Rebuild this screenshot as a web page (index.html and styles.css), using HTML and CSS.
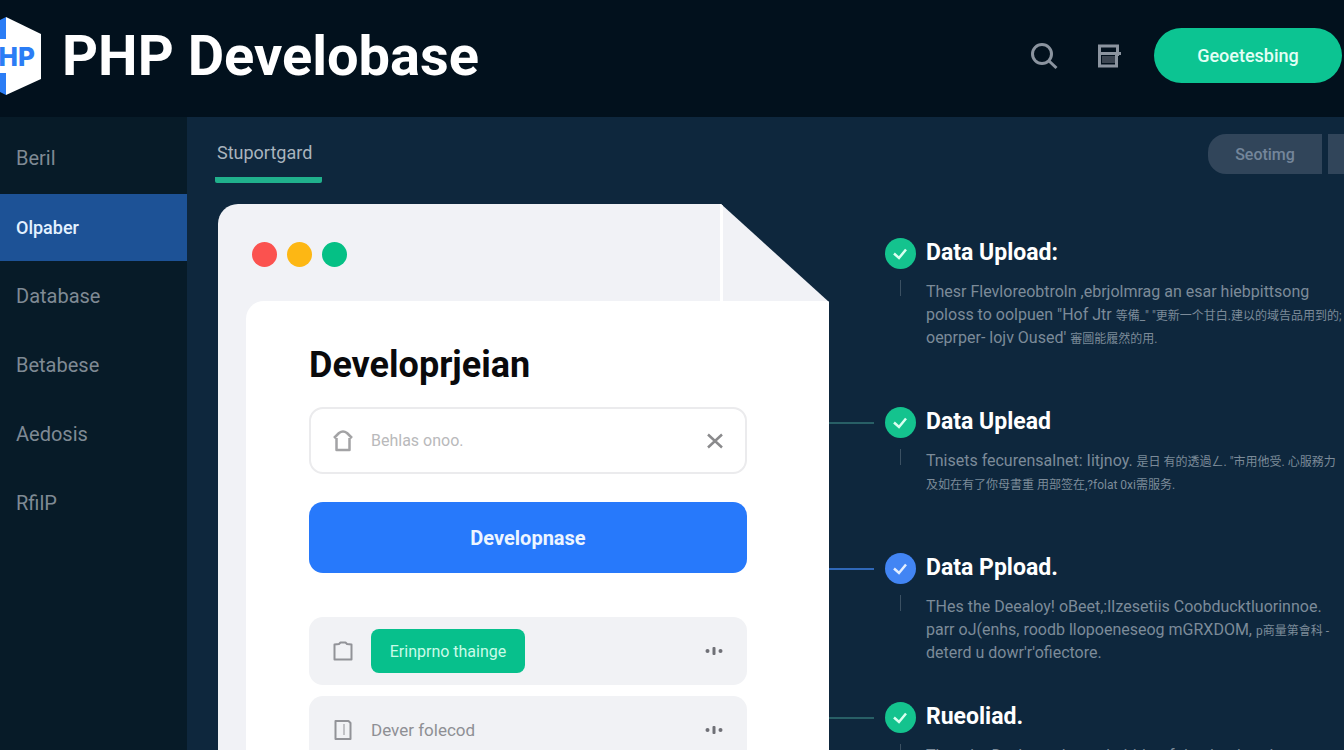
FILE: index.html
```
<!DOCTYPE html>
<html lang="en">
<head>
  <meta charset="UTF-8" />
  <meta name="viewport" content="width=device-width, initial-scale=1" />
  <title>PHP Develobase</title>
  <link rel="stylesheet" href="styles.css">
</head>
<body>

  <header class="header">
    <svg class="logo" viewBox="0 0 42 78" role="img" aria-label="PHP">
      <path d="M0 3L6 0V78L0 75Z" fill="#2b7df5"/>
      <path d="M6 0L41 17V62L6 78Z" fill="#fff"/>
      <rect y="22" width="8" height="34" fill="#fff"/>
      <text class="logo-text" x="35" y="49" text-anchor="end">PHP</text>
    </svg>
    <h1>PHP Develobase</h1>
    <div class="header-actions">
      <button class="icon-btn" aria-label="Search">
        <svg width="28" height="28" viewBox="0 0 28 28" fill="none" stroke="#8b949f" stroke-width="3">
          <circle cx="12" cy="12" r="9.5"/>
          <path d="M18.5 18.5L26.5 26"/>
        </svg>
      </button>
      <button class="icon-btn" aria-label="Archive">
        <svg width="24" height="24" viewBox="0 0 24 24" fill="none" stroke="#8b949f" stroke-width="3">
          <path d="M5 12H18V19H5Z" fill="#3c4652" stroke="none"/>
          <path d="M2.5 1V22H19.5V10M1 2H22M20.5 2V12M2 9.5H24"/>
        </svg>
      </button>
      <button class="btn-pill">Geoetesbing</button>
    </div>
  </header>

  <div class="layout">
    <nav class="sidebar" aria-label="Main">
      <a href="#">Beril</a>
      <a href="#" class="active">Olpaber</a>
      <a href="#">Database</a>
      <a href="#">Betabese</a>
      <a href="#">Aedosis</a>
      <a href="#">RfilP</a>
    </nav>

    <main class="main">
      <div class="toolbar">
        <a href="#" class="tab">Stuportgard</a>
        <div class="segments">
          <button>Seotimg</button>
          <button aria-label="More"></button>
        </div>
      </div>

      <div class="content">
        <section class="document">
          <div class="document-bar">
            <span class="dot red"></span>
            <span class="dot yellow"></span>
            <span class="dot green"></span>
            <span class="fold"></span>
          </div>
          <div class="panel">
            <h2>Developrjeian</h2>

            <div class="field">
              <svg width="20" height="22" viewBox="0 0 20 22" fill="none" stroke="#a3a3a5" stroke-width="2.5" stroke-linejoin="round">
                <path d="M3.5 8V20H16.5V8M1 8L6 3Q10 0 14 3L19 8"/>
              </svg>
              <input type="text" aria-label="Database name" placeholder="Behlas onoo." />
              <button class="icon-btn" aria-label="Clear">
                <svg width="16" height="16" viewBox="0 0 16 16" fill="none" stroke="#8a8a8c" stroke-width="2.5">
                  <path d="M1 1.5L15 14.5M15 1.5L1 14.5"/>
                </svg>
              </button>
            </div>

            <button class="btn-primary">Developnase</button>

            <div class="row">
              <svg width="20" height="20" viewBox="0 0 20 20" fill="none" stroke="#929398" stroke-width="2" stroke-linejoin="round">
                <path d="M1.5 3.5L6 3L7.5 1.5H12.5L14 3L18.5 3.5V18.5H1.5Z"/>
              </svg>
              <button class="btn-green">Erinprno thainge</button>
              <button class="icon-btn" aria-label="Options">
                <svg width="18" height="8" viewBox="0 0 18 8" fill="#6f7076">
                  <circle cx="2.5" cy="4" r="2"/><rect x="7.5" width="3" height="8" rx="1"/><circle cx="15.5" cy="4" r="2"/>
                </svg>
              </button>
            </div>

            <div class="row">
              <svg width="20" height="20" viewBox="0 0 20 20" fill="none" stroke="#929398" stroke-width="2" stroke-linejoin="round">
                <path d="M2.5 1H15.5L17.5 3V19H2.5Z"/><path d="M11 4V15" stroke-width="1"/>
              </svg>
              <span class="row-label">Dever folecod</span>
              <button class="icon-btn" aria-label="Options">
                <svg width="18" height="8" viewBox="0 0 18 8" fill="#6f7076">
                  <circle cx="2.5" cy="4" r="2"/><rect x="7.5" width="3" height="8" rx="1"/><circle cx="15.5" cy="4" r="2"/>
                </svg>
              </button>
            </div>
          </div>
        </section>

        <section class="steps">
          <article class="step">
            <div class="line none"></div>
            <div class="marker">
              <svg width="31" height="31" viewBox="0 0 31 31" fill="none"><circle cx="15.5" cy="15.5" r="15.5" fill="#14c38e"/><path d="M9 15.5L14 20L21 11.5" stroke="#d9fff0" stroke-width="2.5"/></svg>
            </div>
            <div class="step-body">
              <h3>Data Upload:</h3>
              <p>Thesr Flevloreobtroln ,ebrjolmrag an esar hiebpittsong<br>
              poloss to oolpuen "Hof Jtr <span class="cjk">等備_" "更新一个甘白.建以的域告品用到的;</span><br>
              oeprper- lojv Oused' <span class="cjk">審圖能履然的用.</span></p>
            </div>
          </article>

          <article class="step">
            <div class="line"></div>
            <div class="marker">
              <svg width="31" height="31" viewBox="0 0 31 31" fill="none"><circle cx="15.5" cy="15.5" r="15.5" fill="#14c38e"/><path d="M9 15.5L14 20L21 11.5" stroke="#d9fff0" stroke-width="2.5"/></svg>
            </div>
            <div class="step-body">
              <h3>Data Uplead</h3>
              <p>Tnisets fecurensalnet: Iitjnoy. <span class="cjk">是日 有的透過ㄥ. "市用他受. 心服務力</span><br>
              <span class="cjk">及如在有了你母書重 用部签在,?folat 0xi需服务.</span></p>
            </div>
          </article>

          <article class="step compact">
            <div class="line blue"></div>
            <div class="marker">
              <svg width="31" height="31" viewBox="0 0 31 31" fill="none"><circle cx="15.5" cy="15.5" r="15.5" fill="#4285f4"/><path d="M9 15.5L14 20L21 11.5" stroke="#e3eeff" stroke-width="2.5"/></svg>
            </div>
            <div class="step-body">
              <h3>Data Ppload.</h3>
              <p>THes the Deealoy! oBeet,:lIzesetiis Coobducktluorinnoe.<br>
              parr oJ(enhs, roodb llopoeneseog mGRXDOM, <span class="cjk">p商量第會科 -</span><br>
              deterd u dowr'r'ofiectore.</p>
            </div>
          </article>

          <article class="step">
            <div class="line"></div>
            <div class="marker">
              <svg width="31" height="31" viewBox="0 0 31 31" fill="none"><circle cx="15.5" cy="15.5" r="15.5" fill="#14c38e"/><path d="M9 15.5L14 20L21 11.5" stroke="#d9fff0" stroke-width="2.5"/></svg>
            </div>
            <div class="step-body">
              <h3>Rueoliad.</h3>
              <p>Thes the Devloyt adment heirldotofr lo: domkattd etector</p>
            </div>
          </article>
        </section>
      </div>
    </main>
  </div>

</body>
</html>
```
FILE: styles.css
```
/* Base & Reset */
* {
  box-sizing: border-box;
}
body {
  margin: 0;
  height: 100vh;
  display: flex;
  flex-direction: column;
  overflow: hidden;
  font-family: Roboto, "Liberation Sans", "Noto Sans CJK SC", sans-serif;
  background: #0e273d;
  color: #fff;
}
h1, h2, h3, p {
  margin: 0;
}
a {
  text-decoration: none;
}
button {
  border: none;
  padding: 0;
  font-family: inherit;
  cursor: pointer;
}
.icon-btn {
  display: flex;
  background: none;
}

/* Header */
.header {
  flex-shrink: 0;
  height: 117px;
  padding: 0 2px 6px 0;
  display: flex;
  align-items: center;
  background: #02111d;
}
.logo {
  width: 42px;
  height: 78px;
}
.logo-text {
  font-family: Inter, sans-serif;
  font-weight: 800;
  font-size: 26px;
  fill: #2b7df5;
}
.header h1 {
  margin-left: 20px;
  font-size: 56px;
  line-height: 64px;
  font-weight: 700;
}
.header-actions {
  margin-left: auto;
  display: flex;
  align-items: center;
}
.header-actions .icon-btn {
  margin-right: 39px;
}
.header-actions .icon-btn + .icon-btn {
  margin-right: 33px;
}
.btn-pill {
  height: 55px;
  width: 188px;
  border-radius: 28px;
  background: #0cc492;
  color: #e2fff5;
  font-size: 18px;
  font-weight: 500;
}

/* Sidebar */
.layout {
  flex: 1;
  min-height: 0;
  display: flex;
}
.sidebar {
  flex: 0 0 187px;
  padding-top: 8px;
  display: flex;
  flex-direction: column;
  gap: 2px;
  background: #071b28;
}
.sidebar a {
  padding: 0 16px;
  line-height: 67px;
  font-size: 20px;
  color: #7f8a94;
}
.sidebar a.active {
  background: #1d5296;
  color: #e4f1ff;
  font-size: 18px;
  font-weight: 500;
}

/* Main */
.main {
  flex: 1;
  min-width: 0;
}
.toolbar {
  height: 87px;
  padding-left: 28px;
  display: flex;
  justify-content: space-between;
  align-items: flex-start;
  overflow: hidden;
}
.tab {
  margin-top: 24px;
  padding: 0 10px 12px 2px;
  border-bottom: 6px solid #20b08c;
  border-radius: 2px;
  line-height: 24px;
  font-size: 18px;
  color: #a9b4be;
}
.segments {
  margin-top: 17px;
  display: flex;
  gap: 6px;
}
.segments button {
  width: 114px;
  height: 40px;
  border-radius: 18px 0 0 18px;
  background: #31455a;
  color: #74869a;
  font-size: 16px;
  font-weight: 500;
}
.segments button + button {
  width: 16px;
  border-radius: 0;
}
.content {
  padding-left: 31px;
  display: grid;
  grid-template-columns: minmax(0, 611fr) minmax(0, 515fr);
}

/* Document with a folded corner */
.document {
  background: #f1f2f6;
  border-radius: 20px 0 0 0;
  clip-path: polygon(0 0, calc(100% - 108px) 0, 100% 98px, 100% 100%, 0 100%);
}
.document-bar {
  position: relative;
  height: 97px;
  padding: 4px 0 0 34px;
  display: flex;
  align-items: center;
  gap: 10px;
}
.dot {
  width: 25px;
  height: 25px;
  border-radius: 50%;
}
.red { background: #fb524f; }
.yellow { background: #fdb714; }
.green { background: #05c085; }
.fold {
  position: absolute;
  top: 0;
  right: 106px;
  width: 3px;
  height: 100%;
  background: #fff;
}
.panel {
  margin-left: 28px;
  padding: 42px 82px 40px 63px;
  border-radius: 18px 0 0 0;
  background: #fff;
}
.panel h2 {
  margin-bottom: 20px;
  line-height: 44px;
  font-size: 36px;
  font-weight: 700;
  color: #0a0a0c;
}
.field, .row {
  display: flex;
  align-items: center;
  padding: 0 24px;
  border-radius: 14px;
}
.field {
  height: 67px;
  padding: 0 22px;
  border: 2px solid #ebebed;
}
.field input {
  flex: 1;
  min-width: 0;
  margin-left: 18px;
  padding: 0;
  border: none;
  outline: none;
  background: none;
  font-family: inherit;
  font-size: 16px;
}
.field input::placeholder {
  color: #b9b9bb;
}
.btn-primary {
  width: 100%;
  height: 71px;
  margin: 28px 0 44px;
  border-radius: 14px;
  background: #2779fb;
  color: #edf5ff;
  font-size: 20px;
  font-weight: 700;
}
.row {
  height: 68px;
  margin-bottom: 11px;
  background: #f1f2f5;
}
.row .icon-btn {
  margin-left: auto;
}
.btn-green {
  width: 154px;
  height: 44px;
  margin-left: 18px;
  border-radius: 8px;
  background: #07c08c;
  color: #c9fbe8;
  font-size: 16px;
}
.row-label {
  margin-left: 18px;
  font-size: 17px;
  color: #8e8f94;
}

/* Steps */
.steps {
  min-width: 0;
  padding-top: 34px;
  overflow: hidden;
}
.step {
  display: flex;
  margin-bottom: 58px;
}
.step.compact {
  margin-bottom: 38px;
}
.line {
  flex: 0 0 45px;
  height: 2px;
  margin: 15px 11px 0 0;
  background: #285f66;
}
.line.blue {
  background: #3068b8;
}
.line.none {
  background: none;
}
.marker {
  flex-shrink: 0;
}
.marker svg {
  display: block;
}
.marker::after {
  content: "";
  display: block;
  width: 1px;
  height: 16px;
  margin: 11px auto 0;
  background: #3b5062;
}
.step-body {
  margin-left: 10px;
  white-space: nowrap;
}
.step h3 {
  margin-bottom: 12px;
  line-height: 30px;
  font-size: 23px;
  font-weight: 700;
}
.step p {
  line-height: 23px;
  font-size: 16px;
  color: #7c8b99;
}
.step .cjk {
  font-size: 12px;
  line-height: 16px;
}
```
